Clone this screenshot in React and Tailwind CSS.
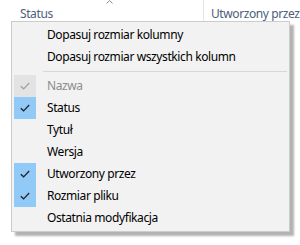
const items = [
  { label: "Nazwa", state: "disabled" },
  { label: "Status", state: "checked" },
  { label: "Tytuł" },
  { label: "Wersja" },
  { label: "Utworzony przez", state: "checked" },
  { label: "Rozmiar pliku", state: "checked" },
  { label: "Ostatnia modyfikacja" },
];

const Check = ({ color }) => (
  <svg width="10" height="8" viewBox="0 0 10 8" fill="none">
    <path d="M0.8 4.2 L3.6 6.8 L9.2 1" stroke={color} strokeWidth="1.2" />
  </svg>
);

export default function App() {
  return (
    <div
      className="relative w-[300px] h-[245px] bg-white overflow-hidden text-[12px] tracking-[-0.4px]"
      style={{ fontFamily: '"Segoe UI", "Noto Sans", sans-serif' }}
    >
      {/* column headers */}
      <div className="flex h-[24px] text-[#4c607a]">
        <div className="relative w-[204px] pl-[20px] pt-[5px] border-r border-[#e5e5e5]">
          Status
          <svg className="absolute left-[106px] top-0" width="7" height="4" viewBox="0 0 7 4" fill="none">
            <path d="M0.5 3.5 L3.5 0.5 L6.5 3.5" stroke="#8a8a8a" strokeWidth="1" />
          </svg>
        </div>
        <div className="pl-[7px] pt-[5px] whitespace-nowrap">Utworzony przez</div>
      </div>

      {/* context menu */}
      <div className="absolute left-[11px] top-[21px] w-[279px] bg-[#f2f2f2] border border-[#cccccc] shadow-[4px_4px_2px_rgba(0,0,0,0.3)] p-[2px] text-black">
        <div className="h-[22px] flex items-center pl-[33px]">Dopasuj rozmiar kolumny</div>
        <div className="h-[22px] flex items-center pl-[33px]">Dopasuj rozmiar wszystkich kolumn</div>
        <div className="h-[7px] flex items-center pl-[29px]">
          <div className="h-px w-full bg-[#d7d7d7]" />
        </div>
        {items.map((it) => (
          <div key={it.label} className="h-[22px] flex items-center">
            <div
              className={
                "w-[22px] h-[22px] flex items-center justify-center " +
                (it.state === "checked" ? "bg-[#91c9f7]" : it.state === "disabled" ? "bg-[#e3e3e3]" : "")
              }
            >
              {it.state === "checked" && <Check color="#1f1f1f" />}
              {it.state === "disabled" && <Check color="#a0a0a0" />}
            </div>
            <span className={"pl-[11px] " + (it.state === "disabled" ? "text-[#8d8d8d]" : "")}>{it.label}</span>
          </div>
        ))}
      </div>
    </div>
  );
}
